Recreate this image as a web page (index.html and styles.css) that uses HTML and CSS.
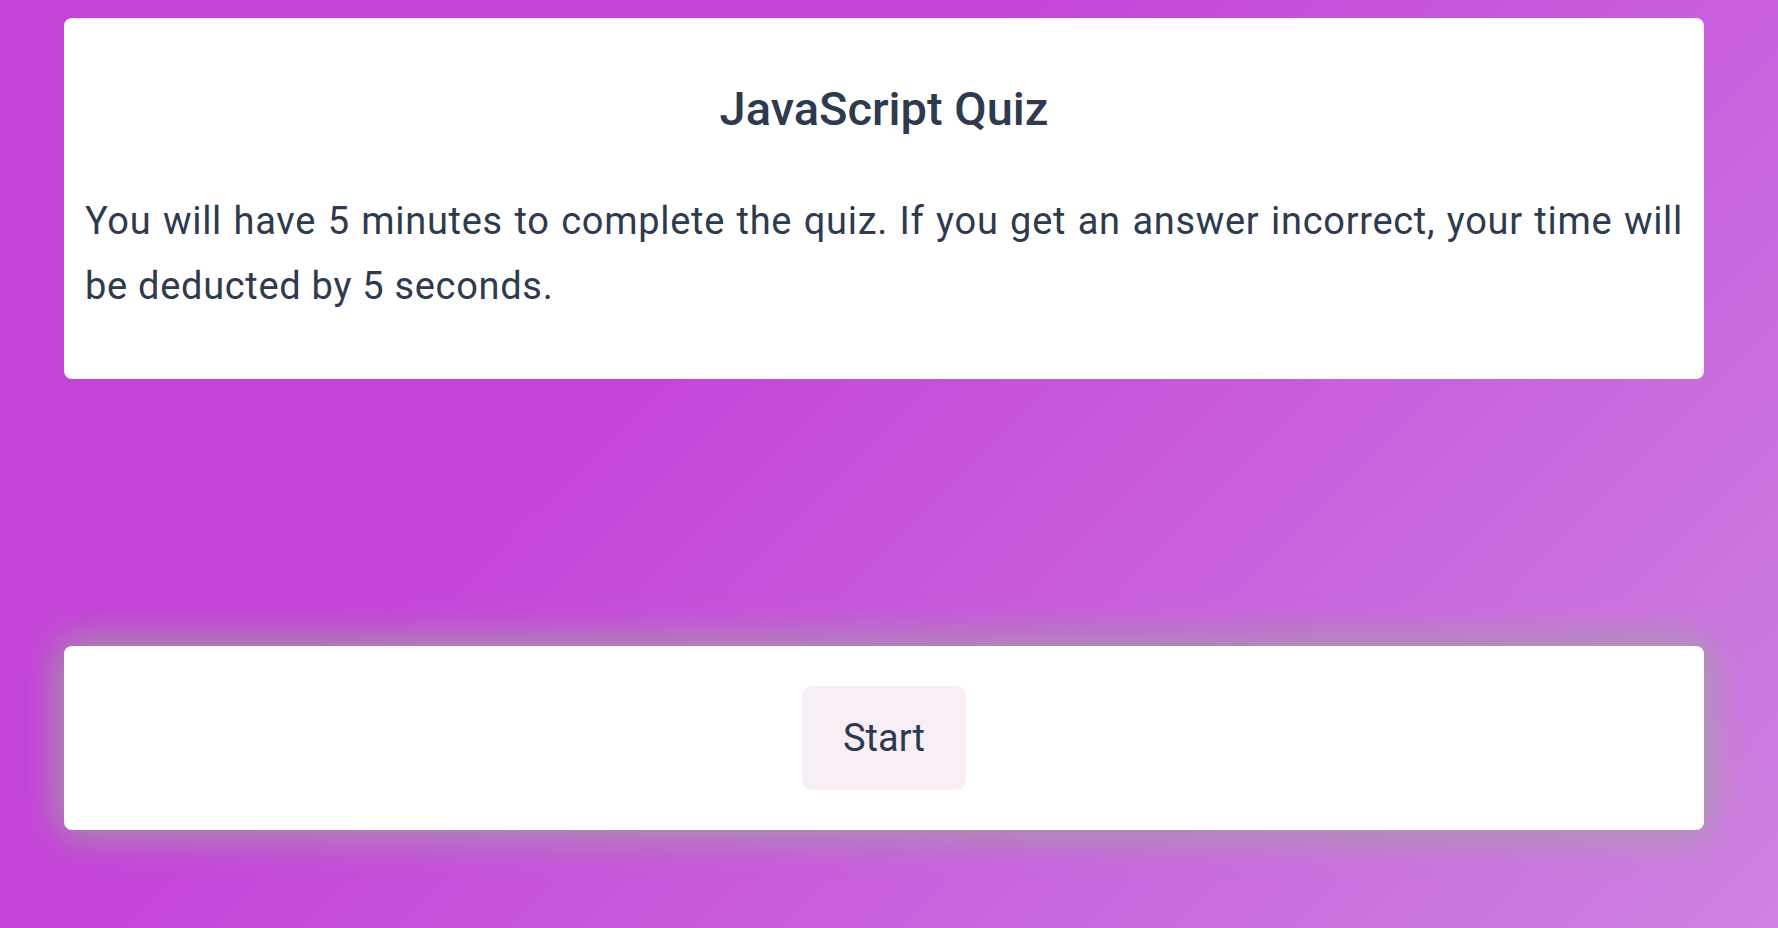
FILE: index.html
```html
<!DOCTYPE html>
<html lang="en">
<head>
<meta charset="utf-8">
<title>JavaScript Quiz</title>
<link rel="stylesheet" href="styles.css">
</head>
<body>
  <main class="page">
    <section class="card intro">
      <h1 class="title">JavaScript Quiz</h1>
      <p class="rules">You will have 5 minutes to complete the quiz. If you get an answer incorrect, your time will be deducted by 5 seconds.</p>
    </section>
    <div class="spacer"></div>
    <section class="card controls">
      <button class="start-btn" type="button">Start</button>
    </section>
  </main>
</body>
</html>
```

FILE: styles.css
```css
* {
  box-sizing: border-box;
}

html, body {
  margin: 0;
  height: 100%;
}

body {
  background: linear-gradient(135deg, #c443d8 35%, #cd82e1 100%);
  font-family: Roboto, "Open Sans", sans-serif;
  color: #2e3a4d;
  overflow: hidden;
}

.page {
  display: flex;
  flex-direction: column;
  padding: 18px 74px 0 64px;
}

.card {
  background: #ffffff;
  border-radius: 8px;
}

.intro {
  padding: 20px 21px 20px;
}

.title {
  margin: 41px 0 0;
  font-size: 47px;
  line-height: 60px;
  font-weight: 500;
  text-align: center;
}

.rules {
  margin: 50px 0 40px;
  font-size: 38px;
  line-height: 65px;
  letter-spacing: 0.7px;
  text-align: justify;
}

.spacer {
  height: 267px;
}

.controls {
  display: flex;
  justify-content: center;
  padding: 40px;
  box-shadow: 0 0 40px 4px #a2a2a2;
}

.start-btn {
  width: 164px;
  height: 104px;
  border: none;
  border-radius: 10px;
  background: #f7eef6;
  color: #2e3a4d;
  font-family: Roboto, "Open Sans", sans-serif;
  font-size: 38px;
  padding: 0;
}
```
